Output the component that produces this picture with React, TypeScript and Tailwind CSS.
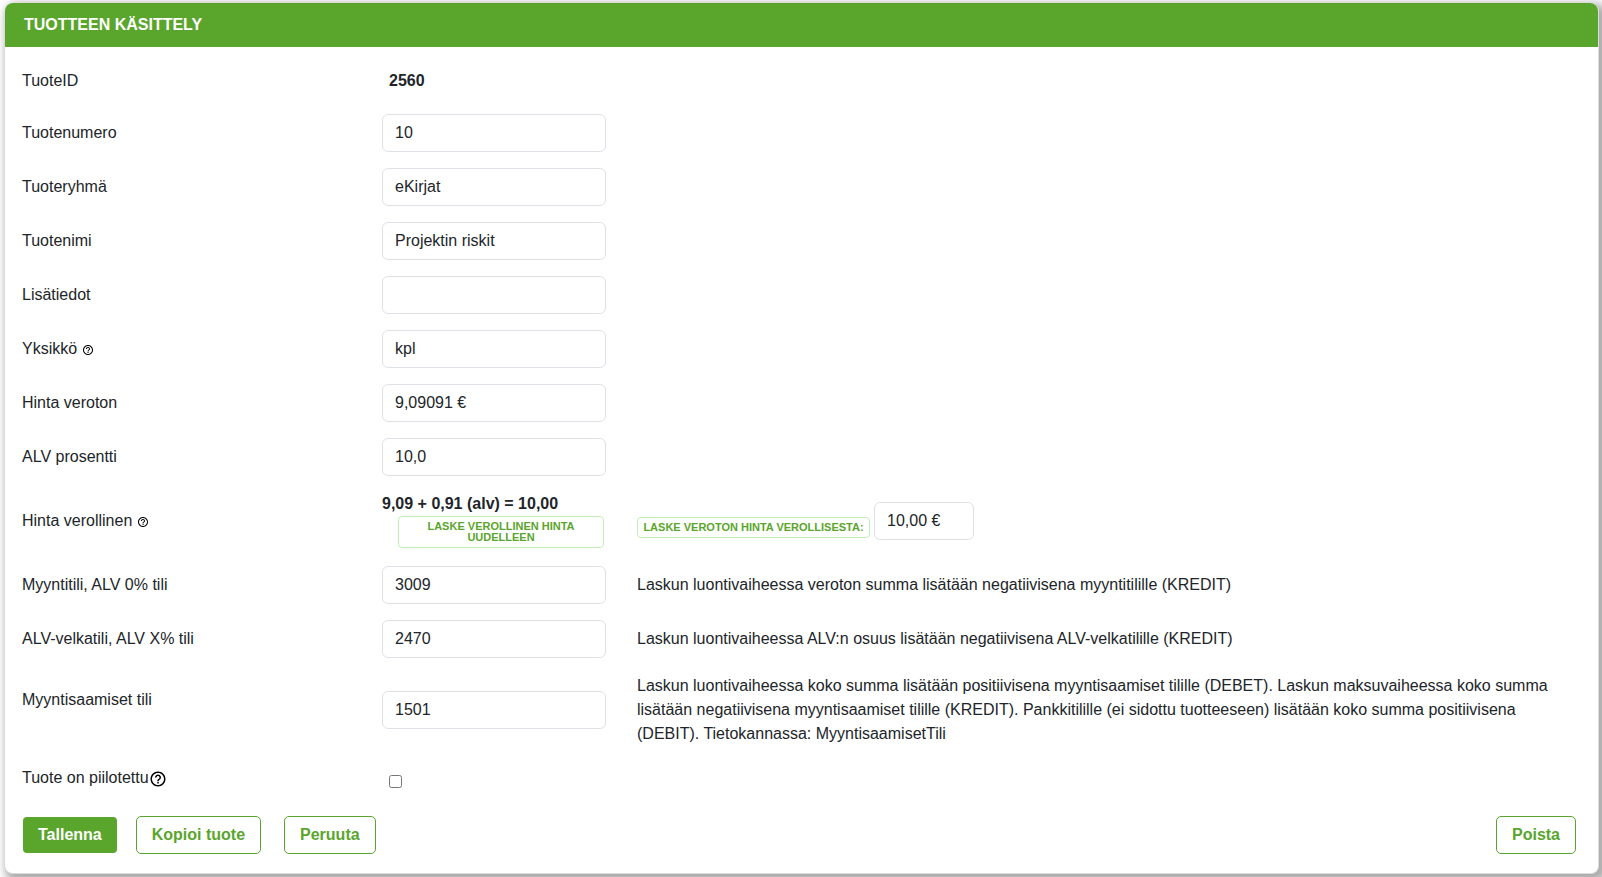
import React from 'react';
import { MdHelpOutline } from 'react-icons/md';

const rowGrid = 'grid grid-cols-[329px_224px_1fr] items-center gap-x-[31px]';
const inputClass = 'h-[38px] w-full rounded-md border border-[#dee2e6] bg-white px-3 text-base text-[#212529]';
const outlineButton = 'h-[38px] rounded-[5px] border border-[#5aa52c] bg-white px-[15px] font-bold text-[#5aa52c]';
const smallButton = 'rounded border border-[#c3eeb9] bg-white px-[5px] text-center text-[11px] leading-[11px] font-bold uppercase text-[#5aa52c]';

interface RowProps {
  label: string;
  id: string;
  help?: boolean;
  children: React.ReactNode;
}

const Row = ({ label, id, help, children }: RowProps) => (
  <div className={`${rowGrid} py-2`}>
    <label htmlFor={id} className="flex items-center gap-[5px]">
      {label}
      {help && <MdHelpOutline className="mt-[2px] size-3 text-black" />}
    </label>
    {children}
  </div>
);

const basicFields = [
  { id: 'tuotenumero', label: 'Tuotenumero', value: '10' },
  { id: 'tuoteryhma', label: 'Tuoteryhmä', value: 'eKirjat' },
  { id: 'tuotenimi', label: 'Tuotenimi', value: 'Projektin riskit' },
  { id: 'lisatiedot', label: 'Lisätiedot', value: '' },
  { id: 'yksikko', label: 'Yksikkö', value: 'kpl', help: true },
  { id: 'hinta-veroton', label: 'Hinta veroton', value: '9,09091 €' },
  { id: 'alv-prosentti', label: 'ALV prosentti', value: '10,0' },
];

const accountFields = [
  {
    id: 'myyntitili',
    label: 'Myyntitili, ALV 0% tili',
    value: '3009',
    text: 'Laskun luontivaiheessa veroton summa lisätään negatiivisena myyntitilille (KREDIT)',
  },
  {
    id: 'alv-velkatili',
    label: 'ALV-velkatili, ALV X% tili',
    value: '2470',
    text: 'Laskun luontivaiheessa ALV:n osuus lisätään negatiivisena ALV-velkatilille (KREDIT)',
  },
];

const App: React.FC = () => {
  return (
    <main className="overflow-hidden bg-white pt-[3px] pr-[3px] pb-[3px] pl-[5px] font-['Liberation_Sans',Arial,sans-serif] text-base leading-6 text-[#212529]">
      <form className="rounded-lg border-r border-b border-[#dcdcdc] bg-white shadow-[4px_4px_8px_4px_rgba(0,0,0,0.33)]">
        <header className="rounded-t-lg bg-[#5aa52c] px-[19px] py-[10px]">
          <h1 className="font-bold text-white uppercase">Tuotteen käsittely</h1>
        </header>

        <div className="px-[17px] pt-[14px] pb-[19px] sm:pr-[22px]">
          <div className={`${rowGrid} pt-2 pb-[13px]`}>
            <span>TuoteID</span>
            <span className="px-[7px] font-bold">2560</span>
          </div>

          {basicFields.map((field) => (
            <Row key={field.id} id={field.id} label={field.label} help={field.help}>
              <input id={field.id} type="text" defaultValue={field.value} className={inputClass} />
            </Row>
          ))}

          <Row id="hinta-verollinen" label="Hinta verollinen" help>
            <div>
              <p className="font-bold">9,09 + 0,91 (alv) = 10,00</p>
              <div className="pr-[2px] pb-[2px] pl-4">
                <button type="button" className={`${smallButton} block h-8 w-full`}>
                  Laske verollinen hinta uudelleen
                </button>
              </div>
            </div>
            <div className="flex items-center gap-1">
              <button type="button" className={`${smallButton} mt-3 h-[21px] w-[233px]`}>
                Laske veroton hinta verollisesta:
              </button>
              <div className="w-[100px]">
                <input id="hinta-verollinen" type="text" defaultValue="10,00 €" className={inputClass} />
              </div>
            </div>
          </Row>

          {accountFields.map((field) => (
            <Row key={field.id} id={field.id} label={field.label}>
              <input id={field.id} type="text" defaultValue={field.value} className={inputClass} />
              <p>{field.text}</p>
            </Row>
          ))}

          <div className={`${rowGrid} py-2`}>
            <label htmlFor="myyntisaamiset" className="pb-5">Myyntisaamiset tili</label>
            <input id="myyntisaamiset" type="text" defaultValue="1501" className={inputClass} />
            <p>
              Laskun luontivaiheessa koko summa lisätään positiivisena myyntisaamiset tilille (DEBET). Laskun maksuvaiheessa koko summa lisätään negatiivisena myyntisaamiset tilille (KREDIT). Pankkitilille (ei sidottu tuotteeseen) lisätään koko summa positiivisena (DEBIT). Tietokannassa: MyyntisaamisetTili
            </p>
          </div>

          <div className={`${rowGrid} h-12`}>
            <label htmlFor="piilotettu" className="flex items-center">
              Tuote on piilotettu
              <MdHelpOutline className="mt-[2px] size-[18px] text-black" />
            </label>
            <div className="flex px-[7px] pt-[6px]">
              <input id="piilotettu" type="checkbox" className="size-[13px]" />
            </div>
          </div>

          <div className="flex items-center pt-[14px]">
            <button type="submit" className="ml-px h-9 rounded bg-[#5aa52c] px-[15px] font-bold text-white">
              Tallenna
            </button>
            <button type="button" className={`${outlineButton} ml-[19px]`}>Kopioi tuote</button>
            <button type="button" className={`${outlineButton} ml-[23px]`}>Peruuta</button>
            <button type="button" className={`${outlineButton} ml-auto`}>Poista</button>
          </div>
        </div>
      </form>
    </main>
  );
};

export default App;
